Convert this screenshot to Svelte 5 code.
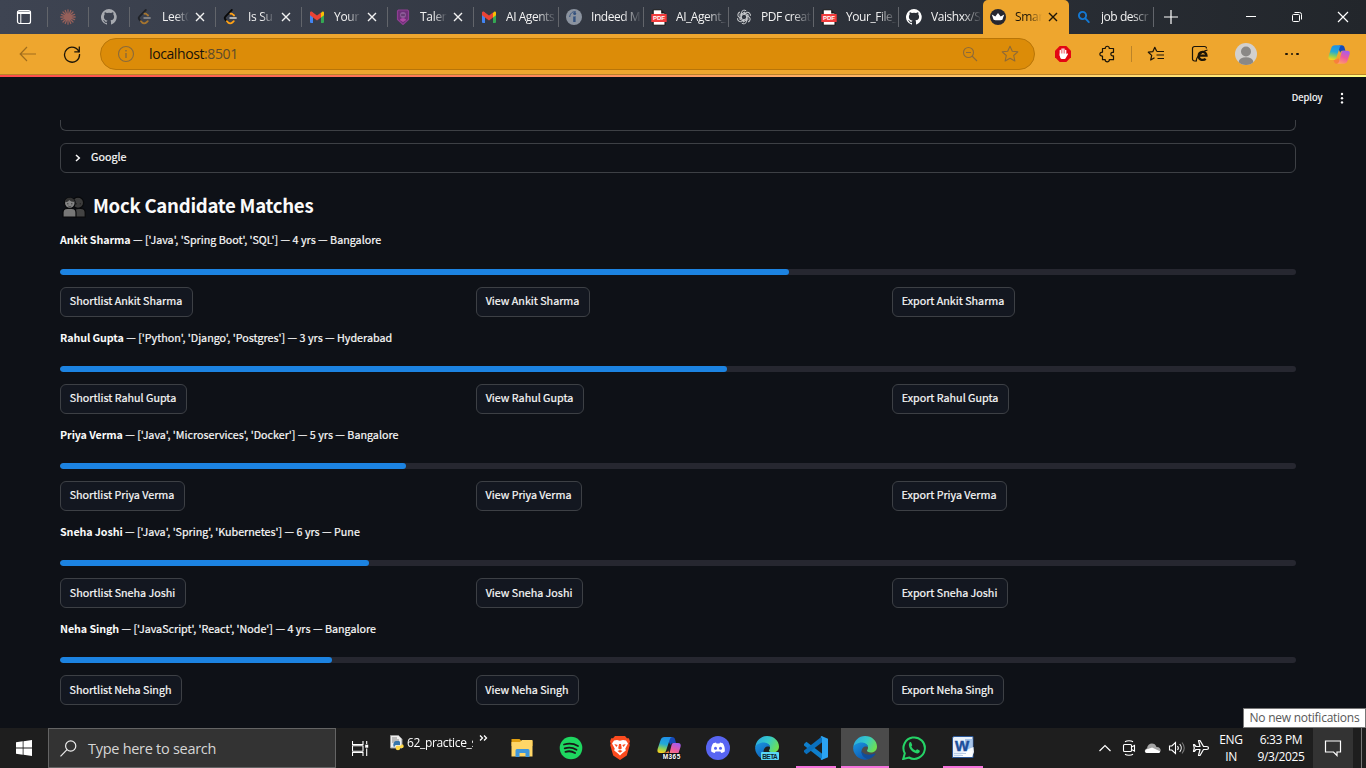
<script>
  const tabs = [
    { icon: 'claude', w: 41 },
    { icon: 'github', w: 41, dim: true },
    { icon: 'leet', w: 86, text: 'LeetC', close: true, dim: true },
    { icon: 'leet', w: 86, text: 'Is Su', close: true },
    { icon: 'gmail', w: 86, text: 'Your', close: true },
    { icon: 'talent', w: 86, text: 'Talen', close: true },
    { icon: 'gmail', w: 85, text: 'AI Agents' },
    { icon: 'indeed', w: 85, text: 'Indeed M' },
    { icon: 'pdf', w: 85, text: 'AI_Agent_' },
    { icon: 'openai', w: 85, text: 'PDF creat' },
    { icon: 'pdf', w: 85, text: 'Your_File_' },
    { icon: 'github', w: 84, text: 'Vaishxx/S', last: true },
    { icon: 'crown', w: 86, text: 'Smar', close: true, active: true },
    { icon: 'search', w: 85, text: 'job descr' }
  ];

  const candidates = [
    { name: 'Ankit Sharma', detail: "['Java', 'Spring Boot', 'SQL'] — 4 yrs — Bangalore", score: 59, widths: [133, 114, 123] },
    { name: 'Rahul Gupta', detail: "['Python', 'Django', 'Postgres'] — 3 yrs — Hyderabad", score: 54, widths: [127, 108, 117] },
    { name: 'Priya Verma', detail: "['Java', 'Microservices', 'Docker'] — 5 yrs — Bangalore", score: 28, widths: [125, 106, 115] },
    { name: 'Sneha Joshi', detail: "['Java', 'Spring', 'Kubernetes'] — 6 yrs — Pune", score: 25, widths: [126, 107, 116] },
    { name: 'Neha Singh', detail: "['JavaScript', 'React', 'Node'] — 4 yrs — Bangalore", score: 22, widths: [122, 103, 112] }
  ];
  const actions = ['Shortlist', 'View', 'Export'];

  const apps = [
    { icon: 'folder' }, { icon: 'spotify' }, { icon: 'brave' }, { icon: 'm365' }, { icon: 'discord' },
    { icon: 'edgebeta' }, { icon: 'vscode', open: true }, { icon: 'edge', active: true }, { icon: 'whatsapp' }, { icon: 'word', open: true }
  ];
</script>

{#snippet copilot(id)}
  <defs>
    <linearGradient id="{id}a" x1=".6" y1="0" x2=".4" y2="1"><stop offset="0" stop-color="#1f8fe8" /><stop offset=".45" stop-color="#22a9d8" /><stop offset=".75" stop-color="#8bcf5a" /><stop offset="1" stop-color="#f5d21c" /></linearGradient>
    <linearGradient id="{id}b" x1=".7" y1="0" x2=".3" y2="1"><stop offset="0" stop-color="#a55cf0" /><stop offset=".5" stop-color="#ee5a9c" /><stop offset="1" stop-color="#ff9a6c" /></linearGradient>
  </defs>
  <path d="M12.500 1H15c2 0 2.700 1 3.100 2.600L19 7h-3c-1.300 0-2.100.7-2.600 2L11 4z" fill="#1649b8" />
  <path d="M6 16.500h2.500c1.500 0 2.200-.7 2.700-2l1.800 4.500c-.6 1.500-1.800 2-3.500 2-2 0-2.800-1.300-3.500-4.500z" fill="#f8803c" />
  <path d="M7.500 1h8c-1.800.2-2.500 1.500-3 3.200l-3.300 10c-.6 1.700-1.400 2.800-3.200 2.800H3c-2.300 0-3-1.600-2.400-4l3-9C4.200 2 5.500 1 7.500 1z" fill="url(#{id}a)" />
  <path d="M16.500 7H21c2.300 0 3.200 1.600 2.500 4l-2.300 7c-.7 2-2 3-4 3H9.300c1.700-.3 2.500-1.500 3-3l2.200-8.700C14.900 7.800 15.500 7 16.500 7z" fill="url(#{id}b)" />
{/snippet}

{#snippet edgeArt(id)}
  <defs>
    <linearGradient id="{id}t" x1="0" y1=".2" x2="1" y2=".6"><stop offset="0" stop-color="#2aa8e0" /><stop offset=".5" stop-color="#35c9c9" /><stop offset="1" stop-color="#6fe04f" /></linearGradient>
    <linearGradient id="{id}b" x1="0" y1="0" x2=".6" y2="1"><stop offset="0" stop-color="#1b96e0" /><stop offset="1" stop-color="#0d5bb5" /></linearGradient>
  </defs>
  <path d="M.3 11.500C.8 4.500 6 0 12 0c7 0 12 5 12 10.500 0 4-3 6-6.200 6-2.600 0-3.800-.9-3.800-1.900 0-.8 1-1.100 1-2.800 0-2.500-2.300-4.300-5.200-4.300C5 7.500 1.500 9 .3 11.500z" fill="url(#{id}t)" />
  <path d="M.1 12C.5 8.500 5 6.200 9.300 6.400c3.400.2 5.600 2 5.700 4.600-3.600-1.500-6.800 1.300-6.400 5.200.3 3.300 3.300 6.200 7.200 6.900A12 12 0 0 1 .1 12z" fill="url(#{id}b)" />
  <path d="M8.500 15c-.4 4 3 7.400 7.200 8.200 2.700-.8 5.200-2.600 6.600-4.900.4-.6 0-1-.6-.7-5 2.200-11.700 1-13.200-2.600z" fill="#124c98" />
{/snippet}

{#snippet icon(name)}
  {#if name === 'claude'}
    <svg width="16" height="16" viewBox="0 0 16 16" stroke="#96605a" stroke-width="1.300" stroke-linecap="round"><path d="M8 .8v14.400M.8 8h14.400M3 3l10 10M13 3 3 13M5.200 1.500l5.600 13M10.800 1.500l-5.600 13M1.400 5.400l13.200 5.200M14.600 5.400 1.400 10.600" /></svg>
  {:else if name === 'github'}
    <svg width="16" height="16" viewBox="0 0 16 16" fill="#fff"><path d="M8 0a8 8 0 0 0-2.500 15.600c.4.100.5-.2.500-.4v-1.400c-2.200.5-2.700-1-2.700-1-.4-.9-.9-1.200-.9-1.200-.7-.5.100-.5.100-.5.800.1 1.200.8 1.200.8.700 1.300 1.900.9 2.300.7.100-.5.300-.9.500-1.100-1.800-.2-3.600-.9-3.600-4 0-.9.300-1.600.8-2.100-.1-.2-.4-1 .1-2.100 0 0 .7-.2 2.200.8a7.500 7.500 0 0 1 4 0c1.500-1 2.200-.8 2.200-.8.400 1.100.2 1.900.1 2.100.5.600.8 1.300.8 2.100 0 3.100-1.900 3.700-3.700 3.900.3.300.6.800.6 1.500v2.200c0 .2.100.5.500.4A8 8 0 0 0 8 0z" /></svg>
  {:else if name === 'leet'}
    <svg width="16" height="16" viewBox="0 0 16 16" fill="none" stroke-width="1.800" stroke-linecap="round" stroke-linejoin="round"><path d="M8.800 1 2.600 7.300c-1 1-1 2.500 0 3.500l1.300 1.400" stroke="#090909" /><path d="m3.900 12.200 1.200 1.300c1.200 1.200 3 1.200 4.200 0l1.500-1.400M7.500 4.700c.8-.3 1.700 0 2.300.6l1.300 1.200" stroke="#ffa116" /><path d="M7.200 9h5.800" stroke="#b3b3b3" /></svg>
  {:else if name === 'gmail'}
    <svg width="16" height="16" viewBox="0 0 16 16"><path d="M1 3.500h3V14H2a1 1 0 0 1-1-1z" fill="#4285f4" /><path d="M12 3.500h3V13a1 1 0 0 1-1 1h-2z" fill="#34a853" /><path d="M12 4l1-1.100c1-.9 2-.1 2 1v2.300L12 8.500z" fill="#fbbc04" /><path d="M1 3.900c0-1.300 1.300-1.900 2.300-1L8 6.500 12 3.600v4.900l-4 3-4-3-3-2.300z" fill="#ea4335" /></svg>
  {:else if name === 'talent'}
    <svg width="16" height="16" viewBox="0 0 16 16"><path d="M3.500 1h9l1 1v8.500L8 15.500 2.500 10.500V2z" fill="#6e2f78" stroke="#8e3f92" stroke-width="1.200" /><circle cx="8" cy="6" r="3" fill="#8d5a98" /><path d="M4.800 11c1-2.500 5.400-2.500 6.400 0L8 13z" fill="#b04aa6" /><path d="M6.200 6h3.600" stroke="#40204d" /></svg>
  {:else if name === 'indeed'}
    <svg width="16" height="16" viewBox="0 0 16 16"><circle cx="8" cy="8" r="8" fill="#8b939f" /><circle cx="8.700" cy="4.500" r="1.500" fill="#34517e" /><path d="M7.200 7.500c1 0 2-.3 2.400-.6V13H7.200z" fill="#34517e" /><path d="M3.700 8c.3-3.600 3-5.700 6-5.400" fill="none" stroke="#34517e" /></svg>
  {:else if name === 'pdf'}
    <svg width="16" height="17" viewBox="0 0 16 17"><path d="M2.200.8h8l3.800 3.700v11.700H2.200z" fill="#fff" stroke="#111" /><path d="M10.200.8v3.700H14z" fill="#111" /><path d="M.3 5h15.400v8H.3z" fill="#f33c3c" /><text x="8" y="11.200" text-anchor="middle" font-family="Liberation Sans" font-size="6" font-weight="700" fill="#fff">PDF</text></svg>
  {:else if name === 'openai'}
    <svg width="16" height="16" viewBox="-8 -8 16 16" fill="none" stroke="#c9cbce" stroke-width="1">
      {#each [0, 60, 120, 180, 240, 300] as a}<path d="M-2.600-1.500V-4.200A2.900 2.900 0 0 1 2.300-6M0-3 3.800-.8V3.400" transform="rotate({a})" />{/each}
    </svg>
  {:else if name === 'crown'}
    <svg width="16" height="16" viewBox="0 0 16 16"><circle cx="8" cy="8" r="8" fill="#262730" /><path d="M1.800 5.500 5.300 7.600 8 4l2.700 3.600 3.500-2.100-1.800 5.200c-2 .8-6.800.8-8.800 0z" fill="#fff" /></svg>
  {:else if name === 'search'}
    <svg width="16" height="16" viewBox="0 0 16 16" fill="none" stroke="#1478d2" stroke-width="1.900" stroke-linecap="round"><circle cx="6.500" cy="6.500" r="3.600" /><path d="m9.300 9.300 3.500 3.800" /></svg>
  {:else if name === 'folder'}
    <svg width="24" height="24" viewBox="0 0 24 24"><path d="M1.500 3h8l2 2h11v5h-21z" fill="#e2a010" /><path d="M1.500 6 10 6l2-2h10.500v16.500h-21z" fill="#ffd667" /><path d="M5.500 21v-6.500a1.500 1.500 0 0 1 1.500-1.500h11a1.500 1.500 0 0 1 1.500 1.500V21h-4v-4H9.500v4z" fill="#3f97dc" /></svg>
  {:else if name === 'spotify'}
    <svg width="24" height="24" viewBox="0 0 24 24"><circle cx="12" cy="12" r="11.300" fill="#1ed760" /><path d="M5 8.500c5-1.400 10-.8 14 1.500M5.700 12.300c4.200-1.200 8.300-.7 11.800 1.400M6.400 15.800c3.500-1 6.800-.6 9.700 1.200" fill="none" stroke="#191919" stroke-width="1.800" stroke-linecap="round" /></svg>
  {:else if name === 'brave'}
    <svg width="24" height="24" viewBox="0 0 24 24"><path d="M7 0h10l2 2.300h1.800L22 5.500l-.7 2 .5 1.500-3 10.500L12 24l-6.800-4.500-3-10.500.5-1.500-.7-2 1.200-3.200H5z" fill="#fb4b1f" /><path d="M6 4.500 9 4l3 .8L15 4l3 .5 2 3-2.700 5 .5 2-3.800 3-2 2-2-2-3.800-3 .5-2L4 7.500z" fill="#fff" /><path d="M6.300 8l3.500 1-1.500 2zM17.700 8l-3.500 1 1.500 2zM11 8h2l.8 4.500-1.800 1-1.800-1zM9.500 15l2.500-1 2.500 1-2.500 1.700z" fill="#fb4b1f" /></svg>
  {:else if name === 'm365'}
    <svg width="26" height="26" viewBox="0 0 26 26"><g transform="translate(1 1)">{@render copilot('m')}</g><path d="M6 18h19v6.500H6z" fill="#111" /><text x="15.500" y="23.600" text-anchor="middle" font-family="Liberation Sans" font-size="6.500" font-weight="700" textLength="17.500" fill="#fff">M365</text></svg>
  {:else if name === 'discord'}
    <svg width="24" height="24" viewBox="0 0 24 24"><circle cx="12" cy="12" r="12" fill="#5865f2" /><path d="M7.200 7.200 10 6.500l.5 1h3l.5-1 2.800.7c1.600 2.400 2.300 5 2 8.200-1.200.9-2.300 1.400-3.500 1.700l-.9-1.500H9.600l-.9 1.500c-1.200-.3-2.300-.8-3.500-1.700-.3-3.200.4-5.800 2-8.200z" fill="#fff" /><circle cx="9.500" cy="12.200" r="1.500" fill="#5865f2" /><circle cx="14.500" cy="12.200" r="1.500" fill="#5865f2" /></svg>
  {:else if name === 'edgebeta'}
    <svg width="24" height="24" viewBox="0 0 24 24">{@render edgeArt('eb')}<rect x="6" y="16" width="18" height="8" rx="1" fill="#5ad7f5" /><text x="15" y="22.500" text-anchor="middle" font-family="Liberation Sans" font-size="6.500" font-weight="700" textLength="15.500" fill="#10252e">BETA</text></svg>
  {:else if name === 'edge'}
    <svg width="24" height="24" viewBox="0 0 24 24">{@render edgeArt('ee')}</svg>
  {:else if name === 'vscode'}
    <svg width="24" height="24" viewBox="0 0 24 24"><path d="M0 8 2.400 5.800 18.500 18v6L0 9.500z" fill="#0f7fcc" /><path d="M0 16l2.400 2.200L18.500 6V0L0 14.500z" fill="#0a70be" /><path d="M17.500 0 24 2.800v18.400L17.500 24l-1-1 1.500-1V2l-1.500-1z" fill="#2ba3f2" /></svg>
  {:else if name === 'whatsapp'}
    <svg width="24" height="24" viewBox="0 0 24 24"><path d="M1.200 23l1.600-5.700A10.700 10.700 0 1 1 7 21.500z" fill="none" stroke="#25d366" stroke-width="2" /><path d="M7.500 6.500c.6-.6 1.400-.5 1.700.1l1 2.300c.1.500-.8 1.300-.8 1.600.8 1.900 2.300 3.200 4.200 3.900.4 0 1.200-1.200 1.700-1.100l2.300 1.100c.4.300.2 1.700-.6 2.400-3.500 2.800-12.700-5-9.500-10.300z" fill="#25d366" /></svg>
  {:else if name === 'word'}
    <svg width="24" height="24" viewBox="0 0 24 24"><path d="M1.500 1.500 3 .5h19v21H1.500z" fill="#e9f1fb" stroke="#2b5797" /><path d="M14 3h7.500v12H14z" fill="#a7c5ea" /><path d="m15 14 7.500-3 .5 5-2 5H8z" fill="#fff" opacity=".9" /><path d="M3 17.500h12M3 19.500h9" stroke="#b9cde6" /><text x="11" y="14.500" text-anchor="middle" font-family="Liberation Sans" font-size="15" font-weight="700" fill="#1d4f9c" stroke="#1d4f9c" stroke-width=".5">W</text></svg>
  {/if}
{/snippet}

<div class="screen">
  <div class="tabbar">
    <div class="tabmenu"><svg width="16" height="16" viewBox="0 0 16 16"><rect x="1.500" y="1.500" width="13" height="13" rx="2" fill="none" stroke="#fff" stroke-width="1.200" /><path d="M1 2.500h14V5H1z" fill="#fff" /><path d="M4.800 5v9" stroke="#fff" /></svg></div>
    {#each tabs as t}
      <div class="tab" class:active={t.active} class:last={t.last} style="width:{t.w}px">
        <span class="fav" class:centered={!t.text} class:dim={t.dim}>{@render icon(t.icon)}</span>
        {#if t.text}<span class="title" class:short={t.close}>{t.text}</span>{/if}
        {#if t.close}<svg class="x" width="10" height="10" viewBox="0 0 10 10"><path d="m1 1 8 8M9 1 1 9" stroke="currentColor" stroke-width="1.400" /></svg>{/if}
      </div>
    {/each}
    <svg class="plus" width="14" height="14" viewBox="0 0 14 14" stroke="#fff" stroke-width="1.200"><path d="M7 0v14M0 7h14" /></svg>
    <div class="winbtns">
      <svg width="46" height="34" viewBox="0 0 46 34"><path d="M18 16.500h10" stroke="#fff" /></svg>
      <svg width="46" height="34" viewBox="0 0 46 34" fill="none" stroke="#fff"><rect x="18.500" y="14.500" width="7" height="7" rx="1" /><path d="M20.500 12.500h5a2 2 0 0 1 2 2v5" /></svg>
      <svg width="46" height="34" viewBox="0 0 46 34"><path d="m18 12 10 10m0-10L18 22" stroke="#fff" stroke-width="1.200" /></svg>
    </div>
  </div>

  <div class="toolbar">
    <div class="cell"><svg width="18" height="16" viewBox="0 0 18 16" fill="none" stroke="#a06d1c" stroke-width="1.200"><path d="M17 8H1.500M8 1 1.200 8 8 15" /></svg></div>
    <div class="cell"><svg width="18" height="18" viewBox="0 0 18 18" fill="none" stroke="#1c1508" stroke-width="1.300"><path d="M16.200 7.500A7.500 7.500 0 1 0 16.500 9M16.300 1.500v5.300h-5" /></svg></div>
    <div class="address">
      <svg width="18" height="18" viewBox="0 0 18 18" fill="none" stroke="#8a6a3a" stroke-width="1.100"><circle cx="9" cy="9" r="7.500" /><path d="M9 8v5M9 5v1.500" stroke-width="1.400" /></svg>
      <span class="url">localhost<i>:8501</i></span>
      <svg class="zoomi" width="16" height="16" viewBox="0 0 16 16" fill="none" stroke="#8d6a38" stroke-width="1.100"><circle cx="6.500" cy="6.500" r="5" /><path d="m10 10 5 5M4 6.500h5" /></svg>
      <svg width="18" height="18" viewBox="0 0 18 18" fill="none" stroke="#8d6a38" stroke-width="1.100" stroke-linejoin="round"><path d="m9 1.200 2.300 5 5.500.6-4.100 3.700 1.200 5.500L9 13.200 4.100 16l1.200-5.500L1.200 6.800l5.500-.6z" /></svg>
    </div>
    <div class="cell"><svg width="16" height="16" viewBox="0 0 16 16"><path d="M4.700 0h6.600L16 4.700v6.600L11.300 16H4.700L0 11.300V4.700z" fill="#e30613" /><path d="M5.300 9.500V4.500M7.100 8V2.900M8.900 8V2.900M10.700 9V4.300" stroke="#fff" stroke-width="1.300" stroke-linecap="round" /><path d="M4.700 7.500h6.700v.7l1.300-1 .4.700-2.600 4.500c-.6.900-4.200.9-4.800 0-.6-.8-1-2.400-1-4.900z" fill="#fff" /></svg></div>
    <div class="cell"><svg width="16" height="18" viewBox="0 0 16 18" fill="none" stroke="#1c1508" stroke-width="1.200" stroke-linejoin="round"><path d="M3.500 3.500h2.700c-.3-3 4.400-3 4.100 0h4.200v3.800h-1.300c-1.900.5-1.900 3 0 3.500h1.300v3.900h-4.200c.3 2.800-4.400 2.800-4.100 0H3.500v-3.600C0 11.300 0 7 3.500 7.200z" /></svg></div>
    <div class="divider"></div>
    <div class="cell"><svg width="18" height="16" viewBox="0 0 18 16" fill="none" stroke="#1c1508" stroke-width="1.200" stroke-linejoin="round"><path d="M7.500 11.700 3.700 14l1-4.600L1.300 6.200l4.500-.5L7.800 1.300l2 4.200M10 5.500h7M9.500 9H17M10.500 12.500H17" /></svg></div>
    <div class="cell"><svg width="18" height="18" viewBox="0 0 18 18" fill="none" stroke="#1c1508"><path d="M5 16H3.500a2 2 0 0 1-2-2V3.500a2 2 0 0 1 2-2h10a2 2 0 0 1 2 2" stroke-width="1.200" /><path d="M7.200 10.700h8.300c0-5.300-7.800-5-7.800.3 0 4.500 5 4.600 7 2.800" stroke-width="2.300" /><path d="M5.500 16.500c-1-3 4-10 11-11.500" stroke-width="1.200" /></svg></div>
    <div class="cell avatar"><svg width="22" height="22" viewBox="0 0 22 22"><defs><clipPath id="av"><circle cx="11" cy="11" r="11" /></clipPath></defs><circle cx="11" cy="11" r="11" fill="#d2d0ce" /><circle cx="11" cy="8.500" r="5" fill="#8a8886" /><ellipse cx="11" cy="19" rx="7.300" ry="4.800" fill="#8a8886" clip-path="url(#av)" /></svg></div>
    <div class="cell dots"><i></i><i></i><i></i></div>
    <div class="cell cop"><svg width="22" height="21" viewBox="0 0 24 22">{@render copilot('c')}</svg></div>
  </div>
  <div class="rainbow"></div>

  <main>
    <header><span>Deploy</span><svg width="4" height="12" viewBox="0 0 4 12" fill="#fafafa"><circle cx="2" cy="2" r="1.200" /><circle cx="2" cy="6.200" r="1.200" /><circle cx="2" cy="10.400" r="1.200" /></svg></header>
    <div class="content">
      <div class="cut"></div>
      <div class="expander"><svg width="6" height="8" viewBox="0 0 6 8" fill="none" stroke="#fafafa" stroke-width="1.500"><path d="m1 1 3.300 3L1 7" /></svg><span>Google</span></div>
      <h2>
        <svg width="24" height="22" viewBox="0 0 24 22"><g stroke="#08090b" stroke-width="1.200"><path d="M12 21v-4.500c0-2.600 2-4 4.500-4h2.300c2.700 0 4.400 1.600 4.400 4V21z" fill="#434343" /><circle cx="16" cy="6.800" r="5.600" fill="#3c3c3c" /><path d="M1 21v-4.500c0-2.600 1.800-4 4.400-4h4.200c2.600 0 4.400 1.600 4.400 4V21z" fill="#777" /><circle cx="7.800" cy="7" r="5.400" fill="#858585" /></g><path d="M3 6.200C3.300 3 5.300 1.800 8 1.800c2.600 0 4.500 1.600 4.800 4.300C10 6 8.300 5 7.300 4 6.300 5.500 4.700 6.200 3 6.200z" fill="#333" /><path d="M5.800 7.300v1M9.800 7.300v1M14.300 7.300v1M18.300 7.300v1" stroke="#161616" /><path d="M6.300 10c1 .8 2 .8 3 0" fill="none" stroke="#333" stroke-width=".8" /></svg>
        <span>Mock Candidate Matches</span>
      </h2>
      {#each candidates as c}
        <section>
          <p><b>{c.name}</b> — {c.detail}</p>
          <div class="track"><div class="fill" style="width:{c.score}%"></div></div>
          <div class="cols">
            {#each actions as a, i}<div><button style="width:{c.widths[i]}px">{a} {c.name}</button></div>{/each}
          </div>
        </section>
      {/each}
    </div>
  </main>

  <footer>
    <div class="start"><svg width="16" height="16" viewBox="0 0 16 16" fill="#fff"><path d="M0 2.200 6.700 1.300v6.300H0zM7.500 1.200 16 0v7.600H7.500zM0 8.400h6.700v6.300L0 13.800zM7.500 8.400H16V16l-8.500-1.200z" /></svg></div>
    <div class="search"><svg width="17" height="17" viewBox="0 0 17 17" fill="none" stroke="#eee" stroke-width="1.200"><circle cx="10.700" cy="6" r="5.100" /><path d="M7 9.700.5 16.300" /></svg><span>Type here to search</span></div>
    <div class="taskview"><svg width="17" height="17" viewBox="0 0 17 17" fill="none" stroke="#fff" stroke-width="1.100"><path d="M.5 1v3.500h10.500V1M.5 16v-3.500h10.500V16M.5 5.500v6M11 5.500v6M.5 5.800h10.500M.5 11.300h10.500M14.700 1v3M14.700 8.500v7.500" /><path d="M13.200 4.700h3v3h-3z" fill="#fff" stroke="none" /></svg></div>
    <div class="pyfile"><svg width="14" height="16" viewBox="0 0 14 16"><path d="M.5.5h8L12 4v9H.5z" fill="#eee" stroke="#999" /><path d="M2 3h5M2 5h7M2 7h4" stroke="#888" /><path d="M4 8c0-1 .5-2 2-2h2.500c1 0 1.500.5 1.500 1.500V10H6c-1 0-1.500 1-1.500 2C3 12 3 8 4 8z" fill="#3876ab" /><path d="M13 9.500c1 1 1 3.500-.5 3.500H10v1c0 1.500-4 1.500-4.200 0V12c0-1 .7-1.300 1.700-1.300h2.600c1 0 1-1.200 1.900-1.200z" fill="#ffd847" /></svg><span>62_practice_s</span></div>
    <svg class="more" width="9" height="6" viewBox="0 0 9 6" fill="none" stroke="#fff" stroke-width="1.300"><path d="m1 .5 2.500 2.500L1 5.500M5 .5 7.500 3 5 5.500" /></svg>
    <div class="apps">
      {#each apps as a}<div class="app" class:open={a.open} class:current={a.active}>{@render icon(a.icon)}</div>{/each}
    </div>
    <div class="tray">
      <svg width="24" height="24" viewBox="0 0 24 24" fill="none" stroke="#fff" stroke-width="1.200"><path d="m6.500 15 5.500-5.500 5.500 5.500" /></svg>
      <svg width="24" height="24" viewBox="0 0 24 24" fill="none" stroke="#fff" stroke-width="1.100"><rect x="6.500" y="8.500" width="8" height="7" rx="1" /><path d="m14.500 11 3-1.500v5.500l-3-1.500M8 5.700c2-1.300 6-1.300 8 0M8 18.300c2 1.300 6 1.300 8 0" /></svg>
      <svg width="24" height="24" viewBox="0 0 24 24"><path d="M6 17c-3 0-2.800-4 0-4.500C6.500 6.500 14 6 15.500 11c5-.5 5.500 6 1.500 6z" fill="#a5a5a5" /><path d="M6 17c-3-.5-2-3.500.5-4 2-.5 3-1 4.500-1.500l8 3.700c.3 1-.7 1.800-2 1.800z" fill="#fff" /></svg>
      <svg width="24" height="24" viewBox="0 0 24 24" fill="none" stroke="#fff" stroke-width="1.100"><path d="M4.500 10v4h2.300l3.700 3.500v-11L6.800 10zM12.500 10c1 1.200 1 2.800 0 4M14.700 8c2 2.300 2 5.700 0 8" /><path d="M17 6.500c2.700 3.300 2.700 7.700 0 11" stroke="#777" /></svg>
      <svg width="24" height="24" viewBox="0 0 24 24" fill="none" stroke="#fff" stroke-width="1.200" stroke-linejoin="round"><path d="M19.500 12c0-1-1-1.500-2-1.500h-3L11 4.500H9.500l1.500 6H7L5.500 8.700h-1l.8 3.300-.8 3.300h1L7 13.500h4l-1.500 6H11l3.500-6h3c1 0 2-.5 2-1.500z" /></svg>
    </div>
    <div class="lang"><span>ENG</span><span>IN</span></div>
    <div class="clock"><span>6:33 PM</span><span>9/3/2025</span></div>
    <div class="notif"><svg width="18" height="18" viewBox="0 0 18 18" fill="none" stroke="#fff" stroke-width="1.200"><path d="M1.500 2h15v11h-3.500v3.500L9.500 13h-8z" /></svg></div>
    <div class="peek"></div>
  </footer>
  <div class="tooltip">No new notifications</div>
</div>

<style>
  :global(body) { margin: 0; background: #0e1117; }
  .screen { position: relative; width: 1366px; height: 768px; overflow: hidden; display: flex; flex-direction: column; font-family: "Open Sans", "Noto Sans", sans-serif; }
  .screen svg { display: block; flex: none; }

  .tabbar { height: 34px; display: flex; align-items: stretch; background: linear-gradient(90deg, #3e4452, #22262b); flex: none; box-sizing: border-box; }
  .tabmenu { width: 48px; display: flex; align-items: center; justify-content: center; position: relative; }
  .tabmenu::after, .tab::after { content: ""; position: absolute; right: 0; top: 7px; width: 1px; height: 20px; background: #62656b; }
  .tab { position: relative; display: flex; align-items: center; flex: none; box-sizing: border-box; color: #f2f2f2; font-size: 12px; }
  .tab.active { background: #eea62e; color: #1c1508; border-radius: 5px 5px 0 0; }
  .tab.active::after, .tab.last::after { display: none; }
  .fav { width: 16px; margin-left: 7px; display: flex; justify-content: center; }
  .fav.centered { margin-left: 12px; }
  .fav.dim { opacity: .55; }
  .title { margin-left: 9px; width: 52px; white-space: nowrap; line-height: 20px; letter-spacing: -.45px; mask-image: linear-gradient(90deg, #000 60%, transparent 98%); }
  .title.short { width: 27px; letter-spacing: -.3px; mask-image: linear-gradient(90deg, #000 50%, transparent 100%); }
  .x { margin-left: 6px; }
  .plus { align-self: center; margin-left: 10px; }
  .winbtns { display: flex; margin-left: auto; }

  .toolbar { height: 41px; box-sizing: border-box; flex: none; display: flex; align-items: center; padding-left: 6px; background: #eea62e; border-bottom: 1px solid #b98329; }
  .cell { width: 44px; display: flex; align-items: center; justify-content: center; flex: none; }
  .address { width: 935px; height: 32px; margin: 0 6px; box-sizing: border-box; border: 1px solid #b87508; border-radius: 16px; background: #dc8c08; display: flex; align-items: center; padding: 0 15px 0 16px; flex: none; }
  .url { margin-left: 14px; flex: 1; font-size: 14px; line-height: 18px; padding-bottom: 1px; letter-spacing: -.4px; color: #17120a; }
  .url i { font-style: normal; color: #5c4a2b; }
  .zoomi { margin-right: 23px; }
  .divider { width: 1px; height: 16px; background: #bb8328; margin: 0 2px; }
  .avatar { margin-left: 2px; }
  .dots { gap: 3px; margin-left: 2px; }
  .dots i { width: 2.600px; height: 2.600px; background: #1c1508; border-radius: 50%; }
  .cop { margin-left: 3px; }
  .rainbow { height: 2px; flex: none; background: linear-gradient(90deg, #ff4b4b 0, #ff8a5c 40%, #ffc068 68%, #fffd80 100%); }

  main { height: 651px; flex: none; background: #0e1117; color: #fafafa; font-family: "Noto Sans CJK SC", sans-serif; font-size: 10.740px; -webkit-text-stroke: .2px #fafafa; }
  header { height: 43px; padding: 0 22px 2px 0; box-sizing: border-box; display: flex; justify-content: flex-end; align-items: center; gap: 17.500px; font-size: 9.400px; }
  header span { padding-bottom: 1px; }
  .content { width: 1236px; margin-left: 60px; }
  .cut { height: 11px; box-sizing: border-box; border: 1px solid #3d4045; border-top: 0; border-radius: 0 0 6px 6px; }
  .expander { margin-top: 12px; height: 30px; box-sizing: border-box; border: 1px solid #3d4045; border-radius: 6px; display: flex; align-items: center; padding: 0 0 1px 14px; gap: 10px; }
  .expander span { padding-bottom: 2px; }
  h2 { margin: 22px 0 0; height: 24px; display: flex; align-items: center; gap: 7px; font-size: 18.600px; font-weight: 700; letter-spacing: -.27px; line-height: 24px; padding-left: 2px; white-space: nowrap; -webkit-text-stroke: 0; }
  h2 span { padding-bottom: 4px; }
  section { height: 97px; padding-top: 11px; box-sizing: border-box; }
  p { margin: 0; height: 20px; line-height: 20px; white-space: nowrap; }
  section + section p { line-height: 22px; }
  p b { letter-spacing: -.1px; -webkit-text-stroke: 0; }
  .track { margin-top: 19px; height: 6px; border-radius: 3px; background: #262730; overflow: hidden; }
  .fill { height: 6px; border-radius: 3px; background: #1c83e1; }
  .cols { margin-top: 12px; display: grid; grid-template-columns: repeat(3, 1fr); gap: 12px; }
  .cols > div { display: flex; }
  button { height: 30px; padding: 0 1px 3px 0; border: 1px solid #3d4045; border-radius: 6px; background: #131720; color: #fafafa; font: inherit; -webkit-text-stroke: .2px #fafafa; white-space: nowrap; }
  section:nth-of-type(n + 4) button { padding-bottom: 1px; }

  footer { height: 40px; flex: none; display: flex; background: #1e1e1e; color: #fff; font-size: 12px; }
  .start { width: 48px; display: flex; align-items: center; justify-content: center; }
  .search { width: 288px; box-sizing: border-box; border: 1px solid #646464; background: #333; display: flex; align-items: center; padding-left: 11px; gap: 11px; color: #d6d6d6; font-size: 14.500px; letter-spacing: -.28px; }
  .taskview { width: 48px; display: flex; align-items: center; justify-content: center; }
  .pyfile { margin: 7px 0 0 6px; display: flex; width: 84px; gap: 3px; white-space: nowrap; height: 18px; line-height: 16px; letter-spacing: -.35px; }
  .pyfile span { width: 67px; mask-image: linear-gradient(90deg, #000 99%, transparent 99%); }
  .more { margin: 7px 0 0 5px; }
  .apps { display: flex; margin-left: 10px; gap: 1px; }
  .app { width: 48px; height: 40px; display: flex; align-items: center; justify-content: center; position: relative; }
  .app.current { background: #4b4b4b; }
  .app.open::after, .app.current::after { content: ""; position: absolute; bottom: 0; height: 2px; left: 4px; right: 4px; background: #f472dc; }
  .app.current::after { left: 0; right: 0; }
  .tray { display: flex; align-items: center; margin-left: auto; }
  .lang, .clock { display: flex; flex-direction: column; align-items: center; padding-top: 3px; line-height: 17px; letter-spacing: -.35px; }
  .lang { width: 36px; }
  .clock { width: 64px; }
  .notif { width: 40px; background: #333; display: flex; align-items: center; justify-content: center; }
  .peek { width: 1px; margin: 0 4px 0 8px; background: #777; }
  .tooltip { position: absolute; left: 1243px; top: 708px; width: 123px; height: 20px; box-sizing: border-box; border: 1px solid #777; background: #fff; color: #575757; font-size: 12px; line-height: 18px; text-align: center; white-space: nowrap; letter-spacing: -.25px; }
</style>
